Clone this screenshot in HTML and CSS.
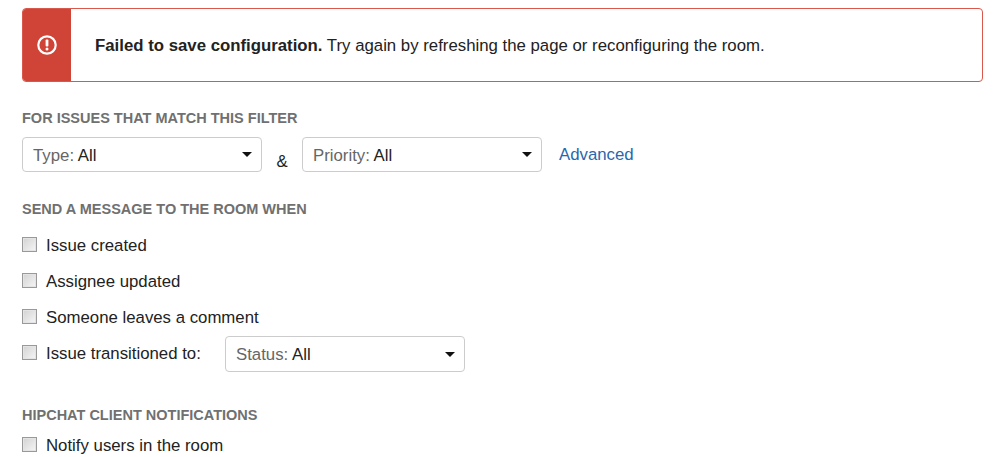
FILE: index.html
```html
<!DOCTYPE html>
<html lang="en">
<head>
    <meta charset="UTF-8">
    <title>Room configuration</title>
    <link rel="stylesheet" href="styles.css">
</head>
<body>
    <div class="alert">
        <div class="alert-icon">
            <svg width="20" height="20" viewBox="0 0 20 20">
                <circle cx="10" cy="10" r="8.7" fill="none" stroke="#fff" stroke-width="2.2"/>
                <rect x="8.6" y="4.6" width="2.8" height="6.8" rx="0.9" fill="#fff"/>
                <circle cx="10" cy="14" r="1.5" fill="#fff"/>
            </svg>
        </div>
        <div class="alert-text"><strong>Failed to save configuration.</strong> Try again by refreshing the page or reconfiguring the room.</div>
    </div>

    <h2 class="heading heading-filter">For issues that match this filter</h2>
    <div class="filter-row">
        <div class="select"><span class="select-value"><span class="select-label">Type:</span> All</span><i class="caret"></i></div>
        <span class="amp">&amp;</span>
        <div class="select"><span class="select-value"><span class="select-label">Priority:</span> All</span><i class="caret"></i></div>
        <a class="advanced" href="#">Advanced</a>
    </div>

    <h2 class="heading heading-send">Send a message to the room when</h2>
    <div class="check-row"><span class="box"></span><span>Issue created</span></div>
    <div class="check-row"><span class="box"></span><span>Assignee updated</span></div>
    <div class="check-row"><span class="box"></span><span>Someone leaves a comment</span></div>
    <div class="check-row check-row-status">
        <span class="box"></span><span class="transition-label">Issue transitioned to:</span>
        <div class="select"><span class="select-value"><span class="select-label">Status:</span> All</span><i class="caret"></i></div>
    </div>

    <h2 class="heading heading-client">HipChat client notifications</h2>
    <div class="check-row"><span class="box"></span><span>Notify users in the room</span></div>
</body>
</html>
```

FILE: styles.css
```css
body {
    font-family: "Liberation Sans", Arial, sans-serif;
    font-size: 16.8px;
    color: #222;
    background: #fff;
    margin: 0;
    padding: 8px 16px 0 22px;
    overflow: hidden;
}
.alert {
    display: flex;
    align-items: center;
    height: 74px;
    box-sizing: border-box;
    border: 1px solid #d9584b;
    border-radius: 4px;
    overflow: hidden;
}
.alert-icon {
    display: flex;
    align-items: center;
    justify-content: center;
    width: 48px;
    height: 100%;
    background-color: #d04437;
}
.alert-text {
    padding: 2px 0 0 24px;
}
.heading {
    margin: 0;
    font-size: 14.5px;
    line-height: 18px;
    font-weight: bold;
    text-transform: uppercase;
    color: #707070;
}
.heading-filter {
    margin-top: 27px;
}
.heading-send {
    margin-top: 28px;
}
.heading-client {
    margin-top: 34px;
}
.filter-row {
    display: flex;
    align-items: flex-start;
    margin-top: 10px;
}
.filter-row .select {
    height: 35px;
}
.select {
    display: flex;
    align-items: center;
    justify-content: space-between;
    width: 240px;
    height: 36px;
    box-sizing: border-box;
    padding: 0 9px 0 10px;
    border: 1px solid #ccc;
    border-radius: 4px;
    background: #fff;
}
.select-value {
    padding-top: 2px;
}
.select-label {
    color: #666;
}
.caret {
    width: 0;
    height: 0;
    border-left: 5px solid transparent;
    border-right: 5px solid transparent;
    border-top: 5px solid #111;
}
.amp {
    width: 40px;
    text-align: center;
    padding-top: 16px;
    line-height: 18px;
}
.advanced {
    margin-left: 17px;
    margin-top: 8px;
    line-height: 20px;
    color: #2a67ac;
    text-decoration: none;
}
.check-row {
    display: flex;
    align-items: center;
    height: 36px;
}
.box {
    width: 13px;
    height: 13px;
    margin-right: 9px;
    margin-top: -3px;
    border: 1px solid #999;
    background: linear-gradient(135deg, #d2d2d2, #f6f6f6);
    box-shadow: inset 0 0 0 1px #e4e4e4;
    flex-shrink: 0;
}
.transition-label {
    width: 179px;
}
.heading-send + .check-row {
    margin-top: 10px;
}
.heading-client + .check-row {
    margin-top: 4px;
}
```
